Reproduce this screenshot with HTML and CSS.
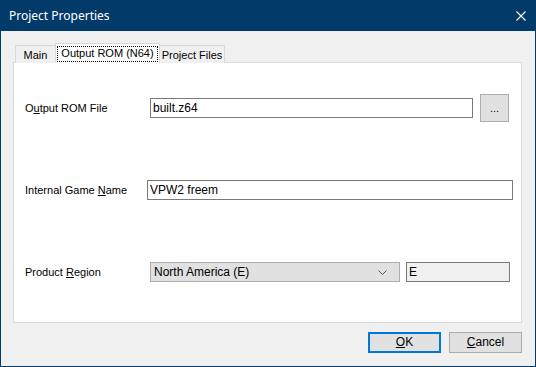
FILE: index.html
```html
<!DOCTYPE html>
<html lang="en">
<head>
    <meta charset="UTF-8">
    <title>Project Properties</title>
    <link rel="stylesheet" href="styles.css">
</head>
<body>

    <div class="window">
        <div class="titlebar">
            <span class="title">Project Properties</span>
            <svg class="close" width="10" height="10" viewBox="0 0 10 10">
                <path d="M0.5 0.5 L9.5 9.5 M9.5 0.5 L0.5 9.5" stroke="#fff" stroke-width="1.1" fill="none"/>
            </svg>
        </div>

        <div class="client">
            <!-- Tabs -->
            <div class="tabs">
                <div class="tab main">Main</div>
                <div class="tab active"><span class="focus">Output ROM (N64)</span></div>
                <div class="tab files">Project Files</div>
            </div>

            <div class="panel">
                <div class="row">
                    <label class="label">O<u>u</u>tput ROM File</label>
                    <div class="textbox rom">built.z64</div>
                    <div class="btn browse">...</div>
                </div>
                <div class="row">
                    <label class="label">Internal Game <u>N</u>ame</label>
                    <div class="textbox gamename">VPW2 freem</div>
                </div>
                <div class="row">
                    <label class="label">Product <u>R</u>egion</label>
                    <div class="combo">
                        <span>North America (E)</span>
                        <svg width="9" height="5" viewBox="0 0 9 5">
                            <path d="M0.5 0.5 L4.5 4.5 L8.5 0.5" stroke="#555" stroke-width="1" fill="none"/>
                        </svg>
                    </div>
                    <div class="textbox code">E</div>
                </div>
            </div>

            <div class="buttons">
                <div class="btn dialog default"><u>O</u>K</div>
                <div class="btn dialog"><u>C</u>ancel</div>
            </div>
        </div>
    </div>

</body>
</html>
```

FILE: styles.css
```css
body {
    margin: 0;
    font-family: "Liberation Sans", Arial, sans-serif;
    font-size: 11px;
    color: #000;
}
.window {
    width: 536px;
    height: 367px;
    box-sizing: border-box;
    border: 1px solid #053c6c;
    border-top: none;
    background: #f0f0f0;
    display: flex;
    flex-direction: column;
}
.titlebar {
    height: 31px;
    background: #023a69;
    margin: 0 -1px;
    display: flex;
    align-items: center;
    justify-content: space-between;
    padding: 0 10px 0 9px;
}
.title {
    color: #fff;
    font-family: "Noto Sans", "Liberation Sans", sans-serif;
    font-size: 12px;
    margin-top: -1px;
}
.client {
    flex: 1;
    padding: 12px 13px 0 12px;
    display: flex;
    flex-direction: column;
}
.tabs {
    display: flex;
    align-items: flex-end;
    padding-left: 2px;
    height: 20px;
    margin-bottom: -1px;
    position: relative;
    z-index: 1;
}
.tab {
    height: 18px;
    box-sizing: border-box;
    border: 1px solid #d9d9d9;
    border-bottom: none;
    background: #f0f0f0;
    padding-top: 3px;
    line-height: 13px;
    text-align: center;
    white-space: nowrap;
}
.tab + .tab {
    margin-left: -1px;
}
.main {
    width: 41px;
}
.files {
    width: 66px;
}
.tab.active {
    height: 20px;
    width: 105px;
    background: #fff;
    padding: 3px 2px 0 2px;
    border-bottom: 1px solid #fff;
}
.focus {
    display: block;
    outline: 1px dotted #000;
    outline-offset: 0;
    padding-bottom: 1px;
    height: 13px;
}
.panel {
    height: 261px;
    box-sizing: border-box;
    background: #fff;
    border: 1px solid #d9d9d9;
    padding: 31px 0 0 11px;
    display: grid;
    grid-auto-rows: 28px;
    row-gap: 54px;
    align-content: start;
}
.row {
    display: flex;
    align-items: center;
}
.label {
    width: 125px;
    flex: none;
}
.textbox {
    height: 20px;
    box-sizing: border-box;
    border: 1px solid #7a7a7a;
    background: #fff;
    padding: 0 2px;
    line-height: 18px;
    font-size: 12px;
}
.rom {
    width: 323px;
}
.gamename {
    width: 366px;
    margin-left: -3px;
}
.code {
    width: 104px;
    margin-left: 6px;
    background: #f0f0f0;
}
.btn {
    box-sizing: border-box;
    border: 1px solid #adadad;
    background: #e1e1e1;
    text-align: center;
}
.browse {
    width: 29px;
    height: 28px;
    margin-left: 7px;
    line-height: 26px;
}
.combo {
    width: 250px;
    height: 20px;
    box-sizing: border-box;
    border: 1px solid #adadad;
    background: #e1e1e1;
    display: flex;
    align-items: center;
    justify-content: space-between;
    padding: 0 12px 0 3px;
    font-size: 12px;
}
.buttons {
    display: flex;
    justify-content: flex-end;
    gap: 8px;
    margin-top: 9px;
}
.dialog {
    width: 73px;
    height: 21px;
    line-height: 19px;
    font-size: 12px;
}
.dialog.default {
    border: 2px solid #0078d7;
    line-height: 17px;
}
```
